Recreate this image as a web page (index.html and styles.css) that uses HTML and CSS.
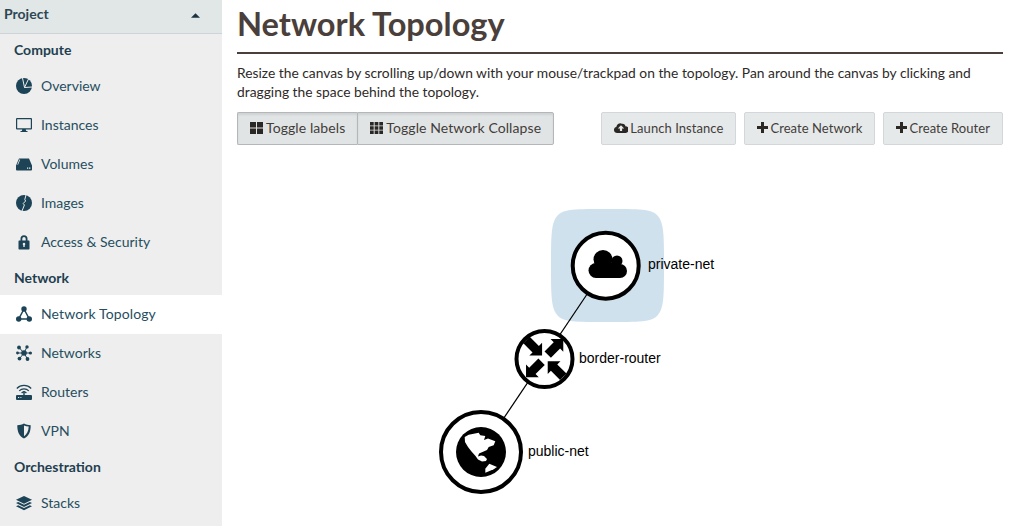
FILE: index.html
```html
<!DOCTYPE html>
<html lang="en">
<head>
<meta charset="utf-8">
<title>Network Topology</title>
<link rel="stylesheet" href="styles.css">
</head>
<body>
<div class="page">
  <nav class="sidebar">
    <div class="project"><span>Project</span><svg class="caret" viewBox="0 0 10 5"><path d="M5 0l5 5H0z"/></svg></div>
    <div class="section">Compute</div>
    <a class="item"><svg class="ico" viewBox="0 0 16 16"><circle cx="8" cy="8" r="8"/><path class="cut" d="M8.500 9.500L6.500 0M8.500 9.500L12.500 1M8.500 9.500L16 9"/></svg>Overview</a>
    <a class="item"><svg class="ico" viewBox="0 0 16 16"><path fill-rule="evenodd" d="M1 1h14a1 1 0 0 1 1 1v9.500a1 1 0 0 1-1 1H9.700l.5 1.500h1.300v1h-7v-1h1.300l.5-1.500H1a1 1 0 0 1-1-1V2a1 1 0 0 1 1-1zm.2 1.200v9h13.600v-9z"/></svg>Instances</a>
    <a class="item"><svg class="ico" viewBox="0 0 16 16"><path fill-rule="evenodd" d="M3 2.500h10L16 9.500v4a.9.9 0 0 1-.9.9H.9a.9.9 0 0 1-.9-.9v-4zm.4 1L1.300 8.800h.8L4.200 3.500zM11 11.500v1.300h1.200v-1.300zm2 0v1.300h1.400v-1.300z"/></svg>Volumes</a>
    <a class="item"><svg class="ico" viewBox="0 0 16 16"><circle cx="8" cy="8" r="8"/><path class="cut" d="M10 0L8.800 4.500 9.600 6 7.200 8.500 8.400 10 6 16"/></svg>Images</a>
    <a class="item"><svg class="ico" viewBox="0 0 16 16"><path fill-rule="evenodd" d="M4.500 6.500V4.800a3.500 3.500 0 0 1 7 0v1.700h1a.9.9 0 0 1 1 1v7a.9.9 0 0 1-1 1h-9a.9.9 0 0 1-1-1v-7a.9.9 0 0 1 1-1zm1.800 0h3.400V4.800a1.700 1.700 0 0 0-3.400 0zM8 8.800a1.300 1.300 0 0 0-.7 2.400v1.800h1.400v-1.800A1.300 1.300 0 0 0 8 8.800z"/></svg>Access &amp; Security</a>
    <div class="section">Network</div>
    <a class="item active"><svg class="ico" viewBox="0 0 16 16"><circle cx="8" cy="3" r="2.700"/><circle cx="2.700" cy="13" r="2.700"/><circle cx="13.300" cy="13" r="2.700"/><path class="tri" d="M8 3L2.700 13h10.600z"/></svg>Network Topology</a>
    <a class="item"><svg class="ico" viewBox="0 0 16 16"><circle cx="8" cy="8" r="2.800"/><circle cx="3" cy="2.500" r="1.900"/><circle cx="11" cy="1.900" r="1.700"/><circle cx="14.400" cy="8" r="1.600"/><circle cx="11.500" cy="14" r="1.900"/><circle cx="3.500" cy="13.600" r="1.900"/><circle cx="1.500" cy="8" r="1.400"/><path class="spoke" d="M3 2.500L8 8l3-6.100M8 8h6.400M8 8l3.500 6M8 8l-4.500 5.600M8 8H1.500"/></svg>Networks</a>
    <a class="item"><svg class="ico" viewBox="0 0 16 16"><path fill-rule="evenodd" d="M7.300 7h1.400v4H15a1 1 0 0 1 1 1v3a1 1 0 0 1-1 1H1a1 1 0 0 1-1-1v-3a1 1 0 0 1 1-1h6.300zM2 13v1h1.200v-1zm2.400 0v1h1v-1z"/><path class="spoke thick" d="M.8 4.500a10 10 0 0 1 14.400 0M3.200 6.800a6.800 6.800 0 0 1 9.600 0M5.600 9a3.500 3.500 0 0 1 4.800 0"/></svg>Routers</a>
    <a class="item"><svg class="ico" viewBox="0 0 16 16"><path fill-rule="evenodd" d="M8 .5c2 1.200 4 1.700 6.700 1.700 0 6-1.500 10.800-6.700 13.300C2.800 13 1.300 8.200 1.300 2.200 4 2.200 6 1.700 8 .5zm0 2v10.800c3-2 4.500-5.300 4.700-9.800C11 3.400 9.500 3.100 8 2.500z"/></svg>VPN</a>
    <div class="section">Orchestration</div>
    <a class="item"><svg class="ico" viewBox="0 0 16 16"><path d="M8 1l8 3.800-8 3.900-8-3.900z"/><path d="M2.200 7l5.800 2.800L13.800 7 16 8l-8 3.900L0 8z"/><path d="M2.200 10.300L8 13l5.800-2.700 2.200 1-8 3.900-8-3.900z"/></svg>Stacks</a>
  </nav>
  <main class="main">
    <h1 class="title">Network Topology</h1>
    <p class="desc">Resize the canvas by scrolling up/down with your mouse/trackpad on the topology. Pan around the canvas by clicking and dragging the space behind the topology.</p>
    <div class="toolbar">
      <div class="group">
        <button class="btn on"><svg class="bi" viewBox="0 0 13 12"><path d="M0 0h6v5.500H0zM7 0h6v5.500H7zM0 6.500h6V12H0zM7 6.500h6V12H7z"/></svg>Toggle labels</button>
        <button class="btn on"><svg class="bi" viewBox="0 0 13 12"><path d="M0 0h3.700v3.400H0zM4.650 0h3.700v3.400h-3.700zM9.300 0H13v3.400H9.300zM0 4.300h3.700v3.400H0zM4.650 4.300h3.700v3.400h-3.700zM9.300 4.300H13v3.400H9.300zM0 8.600h3.700V12H0zM4.650 8.600h3.700V12h-3.700zM9.300 8.600H13V12H9.300z"/></svg>Toggle Network Collapse</button>
      </div>
      <div class="actions">
        <button class="btn act"><svg class="bi wide" viewBox="0 0 14 11"><path fill-rule="evenodd" d="M3.200 11A3.200 3.200 0 0 1 2.400 4.700 3.800 3.800 0 0 1 8 1.800a2.600 2.600 0 0 1 3.400 2.400A3.400 3.400 0 0 1 11 11zM7 3.200L3.800 6.400h2.100V9h2.200V6.400h2.100z"/></svg>Launch Instance</button>
        <button class="btn act"><svg class="bi narrow" viewBox="0 0 11 11"><path d="M4 0h3v4h4v3H7v4H4V7H0V4h4z"/></svg>Create Network</button>
        <button class="btn act"><svg class="bi narrow" viewBox="0 0 11 11"><path d="M4 0h3v4h4v3H7v4H4V7H0V4h4z"/></svg>Create Router</button>
      </div>
    </div>
    <svg class="topology" viewBox="237 160 766 366" width="766" height="366">
      <defs>
        <path id="arrow" d="M-11-4.500H2v-4.500L11 0 2 9V4.500H-11z"/>
      </defs>
      <path class="group-bg" d="M607.500 209C640 209 651 209 657 215 664 222 664 235 664 265.500 664 296 664 309 657 316 651 322 640 322 607.500 322 575 322 564 322 558 316 551 309 551 296 551 265.500 551 235 551 222 558 215 564 209 575 209 607.500 209z"/>
      <path class="link" d="M606 266L481 452"/>
      <circle class="node" cx="605.700" cy="265.700" r="33"/>
      <circle class="node" cx="544.500" cy="359" r="28"/>
      <circle class="node" cx="481" cy="452" r="40"/>
      <g class="cloud">
        <circle cx="603" cy="259.500" r="9.500"/>
        <circle cx="617" cy="261" r="5.500"/>
        <circle cx="596" cy="270.500" r="7.500"/>
        <circle cx="620" cy="271" r="7"/>
        <path d="M596 263h24v15h-24z"/>
      </g>
      <use href="#arrow" transform="translate(534.300 347.800) rotate(45)"/>
      <use href="#arrow" transform="translate(555.500 346.800) rotate(-45)"/>
      <use href="#arrow" transform="translate(533.800 369.500) rotate(135)"/>
      <use href="#arrow" transform="translate(555.500 369) rotate(225)"/>
      <circle cx="481" cy="452" r="25" fill="#000"/>
      <path class="land" d="M464.700 437L468.700 434.700 478.700 432.700 480.300 435.300 485.300 436 484 440 488 438.500 495.300 441.300 493.700 445.300 488.700 447 487 450 482.500 452 479 453.500 478 456.500 481 455.500 484 456 487 459 486 461 482 461.500 478 459.500 475.500 456 471.500 451.500 468 447 465 442z"/>
      <path class="land" d="M489.300 463.700L497 467 493.700 469.300 485.300 472.700 485.300 468.700z"/>
      <text class="label" x="648" y="269">private-net</text>
      <text class="label" x="579" y="363">border-router</text>
      <text class="label" x="528" y="456">public-net</text>
    </svg>
  </main>
</div>
</body>
</html>
```
FILE: styles.css
```css
* { box-sizing: border-box; }
html, body { margin: 0; height: 100%; overflow: hidden; background: #fff; }
body { font-family: Lato, "Liberation Sans", sans-serif; font-size: 14px; color: #433a35; }
.page { display: flex; height: 526px; }
.sidebar { width: 222px; flex: none; background: #eeeeee; color: #264e60; overflow: hidden; }
.project { height: 34px; display: flex; align-items: center; justify-content: space-between; padding: 0 22px 6px 4px; background: #e1e6e6; border-bottom: 1px solid #cdd3d6; font-weight: 700; color: #2d4654; }
.caret { width: 9px; height: 5px; fill: #1c3442; margin-top: 3px; }
.section { height: 33px; display: flex; align-items: center; padding: 0 0 2px 14px; font-weight: 700; color: #1f3f50; }
.item { height: 39px; display: flex; align-items: center; padding: 0 0 2px 16px; }
.item.active { background: #fff; letter-spacing: .12px; }
.ico { width: 16px; height: 16px; margin-right: 9px; fill: #1c4356; flex: none; }
.cut { fill: none; stroke: #eeeeee; stroke-width: 1; }
.tri { fill: none; stroke: #1c4356; stroke-width: 1.500; }
.spoke { fill: none; stroke: #1c4356; stroke-width: 1; }
.spoke.thick { stroke-width: 1.200; }
.main { flex: 1; padding: 0 7px 0 15px; min-width: 0; }
.title { margin: 0; height: 54px; padding-top: 4px; font-size: 32.600px; line-height: 40px; font-weight: 700; color: #4a3f3a; border-bottom: 2px solid #4a3f3a; }
.desc { margin: 9px 0 0; font-size: 13.820px; line-height: 19px; color: #2e2a28; height: 38px; }
.toolbar { display: flex; justify-content: space-between; margin-top: 11px; height: 34px; }
.group { display: flex; }
.actions { display: flex; gap: 8px; }
.btn { height: 33px; padding: 0 12px 2px; font: 14px Lato, "Liberation Sans", sans-serif; letter-spacing: .09px; color: #433d3a; background: #e6e9ea; border: 1px solid #d3d7d9; border-radius: 2px; display: flex; align-items: center; white-space: nowrap; }
.btn.act { font-size: 13px; letter-spacing: .06px; }
.btn.on { background: #e1e4e5; border-color: #b3b7b9; box-shadow: inset 0 2px 2px rgba(0,0,0,.08); }
.group .btn:first-child { border-right-width: 0; border-radius: 2px 0 0 2px; }
.group .btn:last-child { border-radius: 0 2px 2px 0; }
.bi { width: 13px; height: 12px; margin-right: 3px; fill: #2b2725; flex: none; }
.bi.wide { width: 14px; height: 11px; margin-right: 2px; }
.bi.narrow { width: 11px; height: 11px; margin-right: 2px; }
.topology { display: block; margin-top: 14px; }
.group-bg { fill: #d0e1ee; }
.link { stroke: #000; stroke-width: 1.200; fill: none; }
.node { fill: #fff; stroke: #000; stroke-width: 4; }
.cloud { fill: #000; }
.land { fill: #fff; }
.label { font-family: "Liberation Sans", sans-serif; font-size: 14px; fill: #000; }
```
